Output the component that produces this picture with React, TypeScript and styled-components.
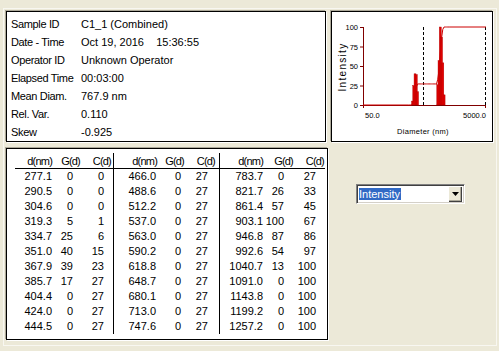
import React from 'react';
import styled, { createGlobalStyle } from 'styled-components';

// ===== TIPOS =====
type Sample = [string, number, number];

interface ColumnSpec {
  cols: number[];
  valuePad: number[];
  headPad: number[];
  width: number;
}

// ===== DADOS =====
const infoRows: [string, string][] = [
  ['Sample ID', 'C1_1 (Combined)'],
  ['Date - Time', 'Oct 19, 2016    15:36:55'],
  ['Operator ID', 'Unknown Operator'],
  ['Elapsed Time', '00:03:00'],
  ['Mean Diam.', '767.9 nm'],
  ['Rel. Var.', '0.110'],
  ['Skew', '-0.925']
];

const samples: Sample[] = [
  ['277.1', 0, 0], ['290.5', 0, 0], ['304.6', 0, 0], ['319.3', 5, 1],
  ['334.7', 25, 6], ['351.0', 40, 15], ['367.9', 39, 23], ['385.7', 17, 27],
  ['404.4', 0, 27], ['424.0', 0, 27], ['444.5', 0, 27],
  ['466.0', 0, 27], ['488.6', 0, 27], ['512.2', 0, 27], ['537.0', 0, 27],
  ['563.0', 0, 27], ['590.2', 0, 27], ['618.8', 0, 27], ['648.7', 0, 27],
  ['680.1', 0, 27], ['713.0', 0, 27], ['747.6', 0, 27],
  ['783.7', 0, 27], ['821.7', 26, 33], ['861.4', 57, 45], ['903.1', 100, 67],
  ['946.8', 87, 86], ['992.6', 54, 97], ['1040.7', 13, 100], ['1091.0', 0, 100],
  ['1143.8', 0, 100], ['1199.2', 0, 100], ['1257.2', 0, 100]
];

const groupSpecs: ColumnSpec[] = [
  { cols: [37, 28, 31], valuePad: [0, 7, 7], headPad: [0, 0, 0], width: 98 },
  { cols: [43, 27, 31], valuePad: [1, 3, 7], headPad: [0, 0, 0], width: 104 },
  { cols: [43, 31, 30], valuePad: [0, 10, 8], headPad: [0, 1, 0], width: 104 }
];

// ===== STYLED COMPONENTS =====
const GlobalStyle = createGlobalStyle`
  html, body {
    margin: 0;
    padding: 0;
    background: #ece9d8;
  }
  body {
    font-family: "Liberation Sans", Arial, sans-serif;
    font-size: 11px;
    color: #000;
  }
`;

const Page = styled.div`
  width: 499px;
  height: 351px;
  padding: 8px 2px 0 3px;
  box-sizing: border-box;
  overflow: hidden;
  background: #ece9d8;
`;

const Frame = styled.div`
  height: 338px;
  border: 1px solid #f8f7f1;
  padding: 2px 0 0 2px;
  box-sizing: border-box;
`;

const TopRow = styled.div`
  display: flex;
  gap: 5px;
`;

const Sunken = styled.div<{ $w: number; $h: number }>`
  width: ${p => p.$w}px;
  height: ${p => p.$h}px;
  box-sizing: border-box;
  background: #fff;
  border: 1px solid #000;
  box-shadow: -1px -1px 0 #aca899, 1px 1px 0 #fff;
  overflow: hidden;
`;

const InfoBody = styled.div`
  padding: 3px 0 0 4px;
`;

const InfoRow = styled.div`
  display: grid;
  grid-template-columns: 70px 1fr;
  height: 18px;
  line-height: 18px;
  white-space: pre;
`;

const InfoLabel = styled.span`
  letter-spacing: -0.35px;
`;

const BottomRow = styled.div`
  display: flex;
  margin-top: 6px;
`;

const TableBody = styled.div`
  display: flex;
  padding: 4px 0 0 8px;
`;

const Group = styled.div<{ $w: number; $divider: boolean }>`
  flex: 0 0 ${p => p.$w}px;
  padding-top: 1px;
  border-left: ${p => (p.$divider ? '1px solid #000' : 'none')};
`;

const GridRow = styled.div<{ $cols: number[]; $head?: boolean }>`
  display: grid;
  grid-template-columns: ${p => p.$cols.map(c => `${c}px`).join(' ')};
  height: ${p => (p.$head ? 14 : 15)}px;
  line-height: ${p => (p.$head ? 14 : 15)}px;
  border-bottom: ${p => (p.$head ? '1px solid #000' : 'none')};
  letter-spacing: ${p => (p.$head ? '-0.8px' : '0')};
`;

const Cell = styled.span<{ $pad: number }>`
  text-align: right;
  padding-right: ${p => p.$pad}px;
  white-space: nowrap;
`;

const SidePanel = styled.div`
  padding: 36px 0 0 28px;
`;

const Combo = styled.div`
  display: flex;
  align-items: center;
  width: 109px;
  height: 20px;
  box-sizing: border-box;
  background: #fff;
  border-top: 1px solid #808080;
  border-left: 1px solid #808080;
  border-bottom: 1px solid #fff;
  border-right: 1px solid #fff;
  box-shadow: inset 1px 1px 0 #404040, inset -1px -1px 0 #d4d0c8;
  padding: 0 2px 0 2px;
`;

const ComboText = styled.div`
  flex: 1;
  display: flex;
  align-items: center;
`;

const Selected = styled.span`
  background: #316ac5;
  color: #fff;
  line-height: 12px;
  padding: 0 1px 0 0;
`;

const ComboButton = styled.div`
  width: 14px;
  height: 16px;
  display: flex;
  align-items: center;
  justify-content: center;
  background: #ece9d8;
  box-shadow: inset 1px 1px 0 #fff, inset -1px -1px 0 #404040, inset -2px -2px 0 #aca899;
`;

// ===== GRÁFICO =====
const xOf = (d: number) => 31 + (Math.log10(d / 50) / 2) * 123;
const yOf = (v: number) => 93 - v * 0.78;

const Chart: React.FC = () => {
  const cumulative = [
    `31,${yOf(0)}`,
    ...samples.map(([d, , c]) => `${xOf(parseFloat(d)).toFixed(2)},${yOf(c).toFixed(2)}`),
    `154,${yOf(100)}`
  ].join(' ');

  return (
    <svg width="160" height="129" viewBox="0 0 160 129" fontFamily="Liberation Sans, Arial, sans-serif">
      {samples
        .filter(([, g]) => g > 0)
        .map(([d, g]) => {
          const x = xOf(parseFloat(d));
          return (
            <rect
              key={d}
              x={x - 1}
              y={yOf(g)}
              width={2}
              height={93 - yOf(g)}
              fill="#e00000"
              stroke="#b00000"
              strokeWidth={0.4}
            />
          );
        })}
      <line x1="91.5" y1="15" x2="91.5" y2="93" stroke="#000" strokeDasharray="3 2" />
      <line x1="153.5" y1="15" x2="153.5" y2="93" stroke="#000" strokeDasharray="3 2" />
      <line x1="31.5" y1="15" x2="31.5" y2="96" stroke="#800000" />
      <line x1="31" y1="93.5" x2="154" y2="93.5" stroke="#800000" />
      <polyline points={cumulative} fill="none" stroke="#cc0000" strokeWidth={1} />
      <line x1="153.5" y1="93" x2="153.5" y2="96" stroke="#800000" />
      {[0, 25, 50, 75, 100].map(v => (
        <g key={v}>
          <line x1="28" y1={yOf(v) + 0.5} x2="31" y2={yOf(v) + 0.5} stroke="#800000" />
          <text x="26" y={yOf(v) + 3} fontSize="7.5" textAnchor="end" fill="#000">
            {v}
          </text>
        </g>
      ))}
      <text x="33" y="106" fontSize="7.5" fill="#000">50.0</text>
      <text x="154" y="106" fontSize="7.5" textAnchor="end" fill="#000">5000.0</text>
      <text x="91" y="122" fontSize="7.5" letterSpacing="0.3" textAnchor="middle" fill="#000">
        Diameter (nm)
      </text>
      <text
        x="0"
        y="0"
        fontSize="10"
        letterSpacing="1.3"
        textAnchor="middle"
        fill="#000"
        transform="translate(14 55) rotate(-90)"
      >
        Intensity
      </text>
    </svg>
  );
};

// ===== COMPONENTE =====
const App: React.FC = () => {
  const groups = [samples.slice(0, 11), samples.slice(11, 22), samples.slice(22, 33)];

  return (
    <>
      <GlobalStyle />
      <Page>
        <Frame>
          <TopRow>
            <Sunken $w={320} $h={131}>
              <InfoBody>
                {infoRows.map(([label, value]) => (
                  <InfoRow key={label}>
                    <InfoLabel>{label}</InfoLabel>
                    <span>{value}</span>
                  </InfoRow>
                ))}
              </InfoBody>
            </Sunken>
            <Sunken $w={162} $h={131}>
              <Chart />
            </Sunken>
          </TopRow>

          <BottomRow>
            <Sunken $w={322} $h={192}>
              <TableBody>
                {groups.map((rows, gi) => {
                  const spec = groupSpecs[gi];
                  return (
                    <Group key={gi} $w={spec.width + (gi > 0 ? 1 : 0)} $divider={gi > 0}>
                      <GridRow $cols={spec.cols} $head>
                        {['d(nm)', 'G(d)', 'C(d)'].map((h, i) => (
                          <Cell key={h} $pad={spec.headPad[i]}>{h}</Cell>
                        ))}
                      </GridRow>
                      {rows.map(([d, g, c]) => (
                        <GridRow key={d} $cols={spec.cols}>
                          <Cell $pad={spec.valuePad[0]}>{d}</Cell>
                          <Cell $pad={spec.valuePad[1]}>{g}</Cell>
                          <Cell $pad={spec.valuePad[2]}>{c}</Cell>
                        </GridRow>
                      ))}
                    </Group>
                  );
                })}
              </TableBody>
            </Sunken>

            <SidePanel>
              <Combo>
                <ComboText>
                  <Selected>Intensity</Selected>
                </ComboText>
                <ComboButton>
                  <svg width="7" height="4" viewBox="0 0 7 4">
                    <polygon points="0,0 7,0 3.5,4" fill="#000" />
                  </svg>
                </ComboButton>
              </Combo>
            </SidePanel>
          </BottomRow>
        </Frame>
      </Page>
    </>
  );
};

export default App;
